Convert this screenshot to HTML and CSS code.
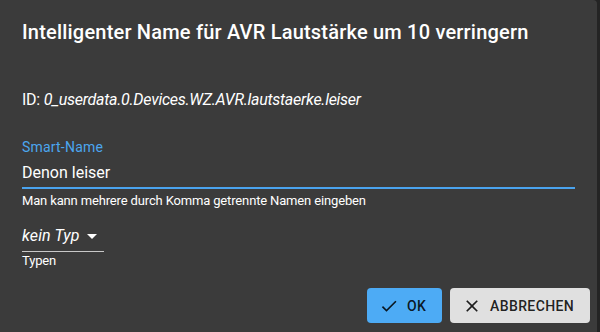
FILE: index.html
```html
<!DOCTYPE html>
<html>
<head>
<meta charset="utf-8">
<link rel="stylesheet" href="styles.css">
</head>
<body>
<div class="dialog">
  <h2 class="title">Intelligenter Name für AVR Lautstärke um 10 verringern</h2>
  <div class="content">
    <div class="id">ID: <i>0_userdata.0.Devices.WZ.AVR.lautstaerke.leiser</i></div>
    <div class="field">
      <label class="label">Smart-Name</label>
      <div class="input">Denon leiser</div>
      <div class="helper">Man kann mehrere durch Komma getrennte Namen eingeben</div>
    </div>
    <div class="select-field">
      <div class="select"><i class="value">kein Typ</i><svg class="arrow" width="24" height="24" viewBox="0 0 24 24"><path d="M7 10l5 5 5-5z" fill="#fff"/></svg></div>
      <div class="helper small-gap">Typen</div>
    </div>
  </div>
  <div class="actions">
    <button class="btn primary"><svg width="20" height="20" viewBox="0 0 24 24"><path d="M9 16.17L4.83 12l-1.42 1.41L9 19 21 7l-1.41-1.41z" fill="currentColor"/></svg><span>OK</span></button>
    <button class="btn grey"><svg width="20" height="20" viewBox="0 0 24 24"><path d="M19 6.41L17.59 5 12 10.59 6.41 5 5 6.41 10.59 12 5 17.59 6.41 19 12 13.41 17.59 19 19 17.59 13.41 12z" fill="currentColor"/></svg><span>ABBRECHEN</span></button>
  </div>
</div>
</body>
</html>
```
FILE: styles.css
```css
html, body {
  margin: 0;
  padding: 0;
  height: 100%;
  background: #242424;
  overflow: hidden;
}
body {
  font-family: Roboto, "Liberation Sans", sans-serif;
  color: #fff;
}
.dialog {
  box-sizing: border-box;
  width: 597px;
  height: 332px;
  background: #3b3b3b;
  border-top-right-radius: 4px;
  display: flex;
  flex-direction: column;
}
.title {
  margin: 0;
  padding: 19px 22px 0 22px;
  font-size: 20px;
  font-weight: 500;
  line-height: 26px;
  letter-spacing: 0.2px;
}
.content {
  padding: 0 22px;
  flex: 1;
}
.id {
  margin-top: 45px;
  font-size: 16px;
  line-height: 20px;
  letter-spacing: -0.27px;
}
.field {
  margin-top: 30px;
  width: 553px;
}
.label {
  display: block;
  font-size: 14px;
  line-height: 15px;
  letter-spacing: 0.2px;
  color: #4ba6ef;
}
.input {
  font-size: 16px;
  line-height: 19px;
  padding: 8px 0 5px;
  border-bottom: 2px solid #4aa3ee;
}
.helper {
  font-size: 13px;
  line-height: 15px;
  margin-top: 4px;
  letter-spacing: -0.15px;
}
.select-field {
  margin-top: 18px;
  width: 82px;
}
.select {
  display: flex;
  align-items: center;
  justify-content: space-between;
  height: 19px;
  font-size: 16px;
  line-height: 19px;
  padding-bottom: 6px;
  border-bottom: 1px solid #c8c8c8;
  white-space: nowrap;
}
.value {
  letter-spacing: 0.1px;
}
.arrow {
  flex: none;
}
.small-gap {
  margin-top: 1px;
}
.actions {
  display: flex;
  justify-content: flex-end;
  gap: 8px;
  padding: 0 7px 9px 0;
}
.btn {
  box-sizing: border-box;
  display: flex;
  align-items: center;
  gap: 8px;
  height: 35px;
  border: none;
  border-radius: 4px;
  font-family: Roboto, "Liberation Sans", sans-serif;
  font-size: 14px;
  font-weight: 500;
  letter-spacing: 0.4px;
  color: rgba(0, 0, 0, 0.87);
  padding: 0 16px 0 12px;
  white-space: nowrap;
}
.btn svg {
  flex: none;
}
.primary {
  background: #4dabf5;
  width: 75px;
}
.grey {
  background: #e0e0e0;
  width: 140px;
}
```
